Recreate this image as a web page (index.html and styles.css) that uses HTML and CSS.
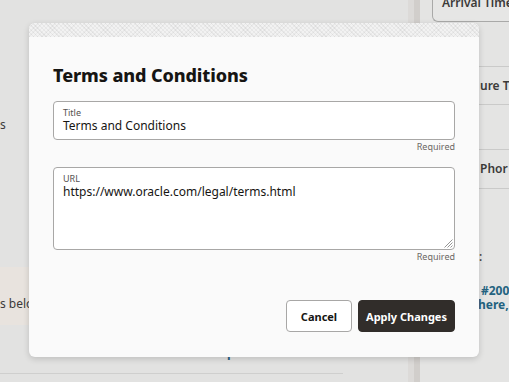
FILE: index.html
```html
<!DOCTYPE html>
<html lang="en">
<head>
<meta charset="utf-8">
<title>Terms and Conditions</title>
<link rel="stylesheet" href="styles.css">
</head>
<body>
<div class="page">
  <div class="main">
    <div class="main-label">s</div>
    <div class="notice"><span>s below</span></div>
    <div class="update">Update</div>
    <div class="rule"></div>
  </div>
  <div class="scroll"><div class="thumb"></div></div>
  <div class="side">
    <div class="arrival"><span>Arrival Time</span></div>
    <div class="row row-a">ure T</div>
    <div class="row row-b">Phor</div>
    <div class="colon">:</div>
    <div class="addr">
      <div class="addr-num">#200</div>
      <div class="addr-line">here, T</div>
    </div>
  </div>
</div>

<div class="dialog" role="dialog" aria-label="Terms and Conditions">
  <div class="dialog-strip"></div>
  <div class="dialog-body">
    <h1 class="dialog-title">Terms and Conditions</h1>
    <div class="field field-title">
      <div class="field-label">Title</div>
      <div class="field-value">Terms and Conditions</div>
    </div>
    <div class="req">Required</div>
    <div class="field field-url">
      <div class="field-label">URL</div>
      <div class="field-value">https://www.oracle.com/legal/terms.html</div>
      <svg class="grip" width="9" height="9" viewBox="0 0 9 9" aria-hidden="true">
        <path d="M8.5 0.5 L0.5 8.5 M8.5 3.5 L3.5 8.5 M8.5 6.5 L6.5 8.5" stroke="#8a8a8a" stroke-width="0.9" fill="none"/>
      </svg>
    </div>
    <div class="req">Required</div>
    <div class="actions">
      <button class="btn btn-cancel">Cancel</button>
      <button class="btn btn-apply">Apply Changes</button>
    </div>
  </div>
</div>
</body>
</html>
```

FILE: styles.css
```css
* { box-sizing: border-box; }

html, body {
  margin: 0;
  padding: 0;
}

body {
  width: 509px;
  height: 382px;
  overflow: hidden;
  position: relative;
  font-family: "Noto Sans", "Liberation Sans", sans-serif;
  color: #161513;
  background: #e2e2e1;
}

.page {
  display: flex;
  height: 382px;
}

/* ---------- dimmed background page ---------- */
.main {
  width: 408px;
  flex: none;
  background: #e2e2e1;
  padding-top: 117px;
  font-size: 12px;
  line-height: 16px;
  color: #3b3a39;
}

.main-label { height: 16px; }

.notice {
  margin-top: 134px;
  width: 343px;
  height: 58px;
  background: #e8e3de;
  padding-top: 29px;
}

.update {
  margin-top: 20px;
  margin-left: 218px;
  font-weight: 700;
  color: #2b6180;
}

.rule {
  margin-top: 12px;
  width: 343px;
  border-top: 1px solid #cfcfce;
}

.scroll {
  width: 12px;
  flex: none;
  background: #dcdad8;
  display: flex;
  justify-content: flex-end;
}

.thumb {
  width: 6px;
  height: 100%;
  background: #d1cecb;
}

.side {
  flex: 1;
  background: #e4e4e3;
  font-size: 12px;
  color: #3b3a39;
  font-weight: 500;
  overflow: hidden;
  white-space: nowrap;
}

.arrival {
  margin-left: 12px;
  height: 22px;
  border: 1px solid #a9a9a8;
  border-top: none;
  border-right: none;
  border-bottom-left-radius: 6px;
  background: #e6e6e5;
  padding-left: 9px;
  line-height: 6px;
  font-weight: 600;
}

.row {
  border-top: 1px solid #cacac9;
  border-bottom: 1px solid #cacac9;
  padding-left: 60px;
  font-weight: 600;
}

.row-a {
  margin-top: 44px;
  height: 39px;
  line-height: 37px;
}

.row-b {
  margin-top: 44px;
  height: 40px;
  line-height: 38px;
}

.colon {
  margin-top: 60px;
  padding-left: 59px;
  line-height: 16px;
}

.addr {
  margin-top: 19px;
  padding-left: 58px;
  line-height: 14px;
  font-weight: 700;
  color: #23627f;
}

.addr-num { padding-left: 3px; }

/* ---------- dialog ---------- */
.dialog {
  position: absolute;
  left: 29px;
  top: 23px;
  width: 450px;
  height: 334px;
  background: #fafafa;
  border-radius: 6px;
  box-shadow: 0 2px 6px rgba(0, 0, 0, 0.16);
  overflow: hidden;
  display: flex;
  flex-direction: column;
}

.dialog-strip {
  height: 14px;
  flex: none;
  background-color: #f2f2f2;
  background-image:
    repeating-linear-gradient(45deg, rgba(0,0,0,0.05) 0 1px, transparent 1px 3px),
    repeating-linear-gradient(-45deg, rgba(0,0,0,0.04) 0 1px, transparent 1px 3px);
}

.dialog-body {
  padding: 0 24px;
  display: flex;
  flex-direction: column;
}

.dialog-title {
  margin: 26px 0 14px;
  font-size: 18px;
  line-height: 24px;
  font-weight: 800;
  letter-spacing: -0.1px;
  color: #161513;
}

.field {
  position: relative;
  background: #ffffff;
  border: 1px solid #a8a7a6;
  border-radius: 4px;
  padding: 5px 9px 0;
}

.field-title { height: 39px; }
.field-url { height: 83px; }

.field-label {
  font-size: 9px;
  line-height: 11px;
  color: #55524f;
}

.field-value {
  font-size: 12px;
  line-height: 16px;
  color: #161513;
}

.grip {
  position: absolute;
  right: 1px;
  bottom: 1px;
}

.req {
  text-align: right;
  font-size: 9px;
  line-height: 14px;
  color: #6a6764;
  margin-bottom: 13px;
}

.actions {
  margin-top: 23px;
  display: flex;
  justify-content: flex-end;
  gap: 6px;
}

.btn {
  height: 32px;
  border-radius: 4px;
  font-family: "Noto Sans", "Liberation Sans", sans-serif;
  font-size: 11px;
  font-weight: 700;
  padding: 0;
  cursor: pointer;
}

.btn-cancel {
  width: 66px;
  background: #ffffff;
  border: 1px solid #a8a7a6;
  color: #161513;
}

.btn-apply {
  width: 97px;
  background: #312d2a;
  border: 1px solid #312d2a;
  color: #ffffff;
}
```
